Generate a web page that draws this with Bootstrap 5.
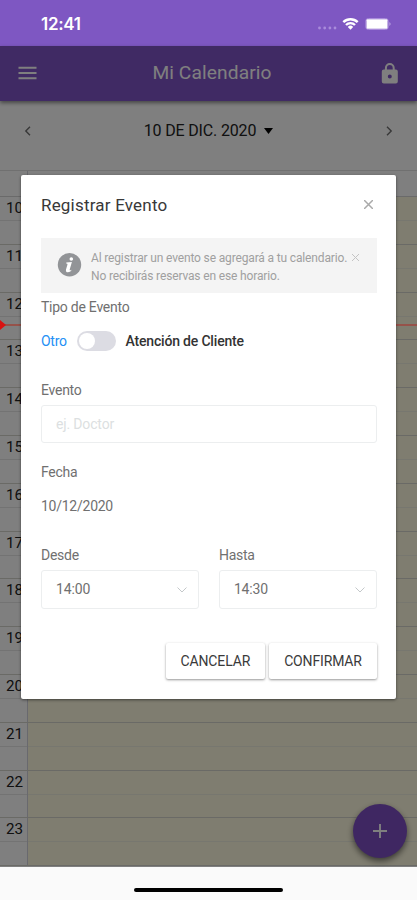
<!DOCTYPE html>
<html lang="es">
<head>
<meta charset="utf-8">
<meta name="viewport" content="width=device-width, initial-scale=1">
<title>Mi Calendario</title>
<link href="https://cdn.jsdelivr.net/npm/bootstrap@5.3.0/dist/css/bootstrap.min.css" rel="stylesheet">
<style>
body{font-family:Roboto,"Liberation Sans",sans-serif;height:900px;overflow:hidden;background:#fafafa;color:#222}
svg{display:block;flex:none}
.status-bar{height:46px;background:#7e57c2;padding:2px 25px 0 41px;color:#fff}
.clock{font:600 17px/20px Inter,Roboto,sans-serif;letter-spacing:-.3px}
.app-screen{height:820.5px;background:#fff}
.app-bar{height:54.5px;background:#8054c8;color:#fff;padding:0 18px;box-shadow:0 2px 4px rgba(0,0,0,.45);z-index:1}
.app-title{font-size:19.2px;letter-spacing:.1px;line-height:24px;padding-left:7px}
.date-bar{height:69.5px;padding:0 23px 9px;font-size:16px}
.date-bar .chosen-day{letter-spacing:-.16px}
.all-day{height:27px;border-top:1px solid #e0e0e0;border-bottom:1px solid #d4d4d4}
.all-day div,.hour-label{width:28px;border-right:1px solid #d2d2dc}
.hour-row{height:47.8px;border-bottom:1px solid #d4d4cc}
.hour-label{padding:0 0 0 6px;font-size:15.2px;line-height:22px;background:linear-gradient(#e6e6e6,#e6e6e6) 0 23px/100% 1px no-repeat}
.hour-slot{background:linear-gradient(#eeeedf,#eeeedf) 0 23px/100% 1px no-repeat #fffbe1}
.now-line{top:278px;height:2px;background:#96524a;z-index:5}
.now-arrow{top:274px;border:5px solid transparent;border-left:6px solid #d81212;border-right:0;z-index:6}
.fab{right:10px;bottom:9px;width:54px;height:54px;background:#7e4fc4;box-shadow:0 3px 6px rgba(0,0,0,.55)}
.shade{background:rgba(0,0,0,.5);z-index:5}
.dialog-box{left:21.4px;top:128.5px;width:375px;height:524px;padding:18px 19.6px;border-radius:2px;background:#fff;z-index:6;box-shadow:0 1px 3px rgba(0,0,0,.5);color:#707070;font-size:14px;letter-spacing:-.25px}
.dialog-title{font-size:17px;line-height:24px;color:#383838;letter-spacing:.2px}
.notice{height:55px;margin-top:21px;background:#f4f4f4;padding:12.5px 18px 0 16px;font-size:12px;letter-spacing:-.15px;line-height:17.7px;color:#a0a0a0}
.info-mark{margin:3px 9px 0 0}
.field-label{line-height:20px}
.kind-label{margin-top:4px}
.kind-row{margin-top:14px;height:21px}
.kind-off{color:#2490f5;width:36px}
.kind-on{color:#333;margin-left:9.5px;font-weight:500;letter-spacing:-.18px}
.toggle{width:39px;height:20px;border-radius:10px;background:#dcdce3;padding:2px}
.toggle span{width:16px;height:16px;background:#fff;border-radius:50%}
.event-label{margin-top:28px}
.date-label{margin-top:18.7px}
.date-value{margin-top:14px}
.times{margin-top:29px;gap:20px}
.dialog-box .field{height:38.5px;margin-top:5.3px;border:1.5px solid #eceeef;border-radius:3px;padding:0 14px;font-size:14px;letter-spacing:-.15px;color:#707070}
.dialog-box .field::placeholder{color:#dcdfe1;opacity:1}
.field svg{margin-right:-3px}
.actions{margin-top:34px}
.dialog-box .btn{height:36.5px;padding:0 15px;border:0;border-radius:2px;font-size:14px;letter-spacing:-.15px;line-height:36px;color:#3a3a3a;box-shadow:0 1px 2.5px rgba(0,0,0,.42)}
.home-area{height:33.5px;padding-top:21px}
.home-pill{width:149px;height:4.5px;background:#000}
</style>
<script src="https://cdn.jsdelivr.net/npm/bootstrap@5.3.0/dist/js/bootstrap.bundle.min.js"></script>
</head>
<body>
<header class="status-bar d-flex align-items-center justify-content-between">
  <span class="clock">12:41</span>
  <svg width="75" height="16" viewBox="0 0 75 16">
    <g fill="#a98bdb"><circle cx="2.5" cy="12" r="1.4"/><circle cx="7.7" cy="12" r="1.4"/><circle cx="12.9" cy="12" r="1.4"/><circle cx="18" cy="12" r="1.4"/></g>
    <g fill="none" stroke="#fff" stroke-width="2.4"><path d="M26.3 6.1a10.4 10.4 0 0 1 14.4 0"/><path d="M29 9a6.4 6.4 0 0 1 9 0"/></g>
    <path d="M30.8 10.9a3.8 3.8 0 0 1 5.4 0L33.5 13.8z" fill="#fff"/>
    <rect x="48.8" y="2.5" width="22.4" height="11" rx="2.5" fill="none" stroke="#a98bdb"/><rect x="49.5" y="3.2" width="21" height="9.6" rx="1" fill="#fff"/><path d="M72.5 6v4q2-2 0-4" fill="#cbb8ea"/>
  </svg>
</header>

<main class="app-screen position-relative d-flex flex-column">
  <nav class="app-bar d-flex align-items-center justify-content-between position-relative">
    <svg width="19" height="14" viewBox="0 0 19 14" fill="none" stroke="#fff" stroke-width="2"><path d="M.5 1.8h18M.5 7h18M.5 12.2h18"/></svg>
    <span class="app-title">Mi Calendario</span>
    <svg width="19" height="23" viewBox="0 0 19 23"><path d="M5.9 9V6a3.9 3.9 0 0 1 7.800 0V9" fill="none" stroke="#fff" stroke-width="2"/><path fill="#fff" fill-rule="evenodd" d="M3.800 7.500h12q2 0 2 2v10q0 2-2 2h-12q-2 0-2-2V9.500q0-2 2-2m6 5a2 2 0 1 0 0 4 2 2 0 0 0 0-4"/></svg>
  </nav>
  <div class="date-bar d-flex align-items-center justify-content-between">
    <svg width="10" height="10" viewBox="0 0 10 10" fill="none" stroke="#707070" stroke-width="1.4"><path d="M7 .8L2.8 5 7 9.2"/></svg>
    <span class="chosen-day d-flex align-items-center gap-2">10 DE DIC. 2020 <svg width="9" height="6" viewBox="0 0 9 6"><path d="M0 0h9L4.5 6z"/></svg></span>
    <svg width="10" height="10" viewBox="0 0 10 10" fill="none" stroke="#707070" stroke-width="1.4"><path d="M3 .8L7.2 5 3 9.2"/></svg>
  </div>
  <div class="all-day d-flex"><div></div></div>
  <div class="hour-row d-flex"><div class="hour-label">10</div><div class="hour-slot flex-fill"></div></div>
  <div class="hour-row d-flex"><div class="hour-label">11</div><div class="hour-slot flex-fill"></div></div>
  <div class="hour-row d-flex"><div class="hour-label">12</div><div class="hour-slot flex-fill"></div></div>
  <div class="hour-row d-flex"><div class="hour-label">13</div><div class="hour-slot flex-fill"></div></div>
  <div class="hour-row d-flex"><div class="hour-label">14</div><div class="hour-slot flex-fill"></div></div>
  <div class="hour-row d-flex"><div class="hour-label">15</div><div class="hour-slot flex-fill"></div></div>
  <div class="hour-row d-flex"><div class="hour-label">16</div><div class="hour-slot flex-fill"></div></div>
  <div class="hour-row d-flex"><div class="hour-label">17</div><div class="hour-slot flex-fill"></div></div>
  <div class="hour-row d-flex"><div class="hour-label">18</div><div class="hour-slot flex-fill"></div></div>
  <div class="hour-row d-flex"><div class="hour-label">19</div><div class="hour-slot flex-fill"></div></div>
  <div class="hour-row d-flex"><div class="hour-label">20</div><div class="hour-slot flex-fill"></div></div>
  <div class="hour-row d-flex"><div class="hour-label">21</div><div class="hour-slot flex-fill"></div></div>
  <div class="hour-row d-flex"><div class="hour-label">22</div><div class="hour-slot flex-fill"></div></div>
  <div class="hour-row d-flex"><div class="hour-label">23</div><div class="hour-slot flex-fill"></div></div>
  <div class="fab position-absolute rounded-circle d-flex align-items-center justify-content-center">
    <svg width="14" height="14" viewBox="0 0 14 14" stroke="#fff" stroke-width="1.9"><path d="M7 0v14M0 7h14"/></svg>
  </div>
  <div class="shade position-absolute top-0 start-0 w-100 h-100"></div>
  <div class="now-line position-absolute start-0 w-100"></div>
  <div class="now-arrow position-absolute start-0"></div>

  <section class="dialog-box position-absolute" role="dialog">
    <div class="d-flex align-items-center justify-content-between">
      <h1 class="dialog-title fw-normal mb-0">Registrar Evento</h1>
      <svg class="me-1" width="9" height="9" viewBox="0 0 9 9" stroke="#aaa" stroke-width="1.5"><path d="M0 0l9 9M9 0L0 9"/></svg>
    </div>
    <div class="notice d-flex">
      <svg class="info-mark" width="25" height="24" viewBox="0 0 25 24"><circle cx="12.5" cy="11.8" r="11.7" fill="#929497"/><path d="M9.3 9.6l5.600-.6-2.200 7.600q-.3 1.500 1.700.2l-.3 1.100q-2.400 1.600-4.200 1.300-1.500-.4-.9-2.600l1.500-5.100q.3-1.100-1.300-1.100z" fill="#fff"/><circle cx="14.300" cy="6" r="1.800" fill="#fff"/></svg>
      <div class="text-nowrap">Al registrar un evento se agregará a tu calendario.<br>No recibirás reservas en ese horario.</div>
      <svg class="ms-auto mt-1" width="7" height="7" viewBox="0 0 7 7" stroke="#c4c4c4"><path d="M0 0l7 7M7 0L0 7"/></svg>
    </div>
    <div class="field-label kind-label">Tipo de Evento</div>
    <div class="kind-row d-flex align-items-center">
      <span class="kind-off">Otro</span>
      <div class="toggle d-flex"><span></span></div>
      <span class="kind-on">Atención de Cliente</span>
    </div>
    <div class="field-label event-label">Evento</div>
    <input class="field form-control" placeholder="ej. Doctor">
    <div class="field-label date-label">Fecha</div>
    <div class="field-label date-value">10/12/2020</div>
    <div class="times d-flex">
      <div class="flex-fill"><div class="field-label">Desde</div>
        <div class="field d-flex align-items-center justify-content-between"><span>14:00</span><svg width="10" height="6" viewBox="0 0 10 6" fill="none" stroke="#c4c8ca"><path d="M.5.5L5 5 9.500.5"/></svg></div></div>
      <div class="flex-fill"><div class="field-label">Hasta</div>
        <div class="field d-flex align-items-center justify-content-between"><span>14:30</span><svg width="10" height="6" viewBox="0 0 10 6" fill="none" stroke="#c4c8ca"><path d="M.5.5L5 5 9.500.5"/></svg></div></div>
    </div>
    <div class="actions d-flex justify-content-end gap-1">
      <button class="btn">CANCELAR</button><button class="btn">CONFIRMAR</button>
    </div>
  </section>
</main>
<footer class="home-area"><div class="home-pill rounded-pill mx-auto"></div></footer>
</body>
</html>
